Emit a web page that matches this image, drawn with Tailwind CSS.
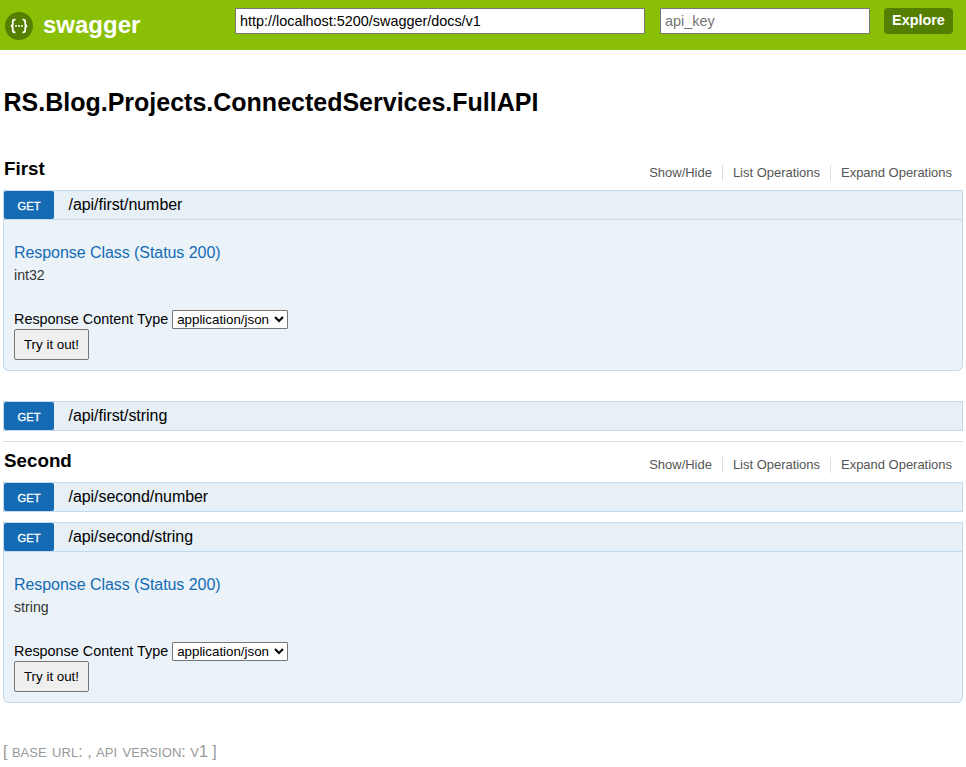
<!DOCTYPE html>
<html lang="en">
<head>
<meta charset="utf-8">
<title>Swagger UI</title>
<script src="https://cdn.jsdelivr.net/npm/@tailwindcss/browser@4"></script>
</head>
<body class="h-[767px] overflow-hidden bg-white font-['Liberation_Sans',Arial,sans-serif] text-black">
<header class="flex h-[50px] items-start bg-[#89bf04] pl-[5px] pr-[13px]">
  <a class="flex items-start pt-[11px] text-white">
    <svg class="h-[30px] w-[30px]" viewBox="0 0 30 30" fill="none">
      <circle cx="14" cy="15" r="14" fill="#547f00"/>
      <path d="M10.5 8.7H9.8Q7.8 8.7 7.8 10.7V13Q7.8 15 5.8 15Q7.8 15 7.8 17V19.3Q7.8 21.3 9.8 21.3H10.5M17.5 8.7H18.2Q20.2 8.7 20.2 10.7V13Q20.2 15 22.2 15Q20.2 15 20.2 17V19.3Q20.2 21.3 18.2 21.3H17.5" stroke="#fff" stroke-width="1.8"/>
      <g fill="#fff"><circle cx="11" cy="15" r="1"/><circle cx="14" cy="15" r="1"/><circle cx="17" cy="15" r="1"/></g>
    </svg>
    <span class="ml-2 text-2xl leading-7 font-bold">swagger</span>
  </a>
  <form class="ml-auto flex pt-2">
    <input class="h-[26px] w-[410px] rounded-[1px] border border-[#767676] bg-white px-1 text-[14.4px]" value="http://localhost:5200/swagger/docs/v1">
    <input class="ml-[15px] h-[26px] w-[210px] rounded-[1px] border border-[#767676] bg-white px-1 text-[14.4px] placeholder:text-[#757575]" placeholder="api_key">
    <button type="button" class="ml-[14px] h-[26px] w-[69px] rounded bg-[#547f00] pb-px text-[14.4px] leading-[25px] font-bold text-white">Explore</button>
  </form>
</header>
<main class="pl-[3px] pr-[3px]">
  <h1 class="mt-[37px] h-[30px] pl-[0.5px] text-[25px] leading-[30px] font-bold">RS.Blog.Projects.ConnectedServices.FullAPI</h1>

  <section class="mt-[33px]">
    <div class="flex h-10 items-start justify-between pt-[7px]">
      <h2 class="pl-px text-[18.8px] leading-6 font-bold">First</h2>
      <div class="mt-[8px] mr-[11px] flex h-4 text-[13px] leading-4 tracking-[-0.02px] text-[#555]">
        <a>Show/Hide</a><a class="ml-[10px] border-l border-[#ddd] pl-[10px]">List Operations</a><a class="ml-[10px] border-l border-[#ddd] pl-[10px]">Expand Operations</a>
      </div>
    </div>
    <div class="flex h-[30px] border border-[#c3d9ec] bg-[#e7eff7]">
      <span class="h-7 w-[50px] rounded-xs bg-[#146bb4] pt-px text-center text-[11.2px] leading-7 text-white [-webkit-text-stroke:0.3px_white]">GET</span>
      <span class="ml-[14.5px] text-base leading-[27px] tracking-[-0.05px]">/api/first/number</span>
    </div>
    <div class="flex h-[151px] flex-col items-start rounded-b-md border border-t-0 border-[#c3d9ec] bg-[#ebf3f9] px-[10px] pt-[23px]">
      <h4 class="h-5 text-base leading-5 tracking-[-0.06px] text-[#146bb4]">Response Class (Status 200)</h4>
      <div class="mt-[3px] h-5 text-[14.2px] leading-[18px] text-[#333]">int32</div>
      <div class="mt-[24px] flex h-[19px] text-[14.4px] leading-[18px]">
        <label>Response Content Type</label>
        <select class="ml-1 h-[19px] w-[116px] rounded-[1px] border border-[#767676] bg-white text-[13.33px] leading-4"><option>application/json</option></select>
      </div>
      <button class="h-[31px] w-[75px] rounded-xs border border-[#767676] bg-[#efefef] text-[13.33px]">Try it out!</button>
    </div>
    <div class="mt-[30px] flex h-[30px] border border-[#c3d9ec] bg-[#e7eff7]">
      <span class="h-7 w-[50px] rounded-xs bg-[#146bb4] pt-px text-center text-[11.2px] leading-7 text-white [-webkit-text-stroke:0.3px_white]">GET</span>
      <span class="ml-[14.5px] text-base leading-[27px] tracking-[-0.05px]">/api/first/string</span>
    </div>
  </section>

  <section class="mt-[10px] border-t border-[#ddd]">
    <div class="flex h-10 items-start justify-between pt-[7px]">
      <h2 class="pl-px text-[18.8px] leading-6 font-bold">Second</h2>
      <div class="mt-[8px] mr-[11px] flex h-4 text-[13px] leading-4 tracking-[-0.02px] text-[#555]">
        <a>Show/Hide</a><a class="ml-[10px] border-l border-[#ddd] pl-[10px]">List Operations</a><a class="ml-[10px] border-l border-[#ddd] pl-[10px]">Expand Operations</a>
      </div>
    </div>
    <div class="flex h-[30px] border border-[#c3d9ec] bg-[#e7eff7]">
      <span class="h-7 w-[50px] rounded-xs bg-[#146bb4] pt-px text-center text-[11.2px] leading-7 text-white [-webkit-text-stroke:0.3px_white]">GET</span>
      <span class="ml-[14.5px] text-base leading-[27px] tracking-[-0.05px]">/api/second/number</span>
    </div>
    <div class="mt-[10px] flex h-[30px] border border-[#c3d9ec] bg-[#e7eff7]">
      <span class="h-7 w-[50px] rounded-xs bg-[#146bb4] pt-px text-center text-[11.2px] leading-7 text-white [-webkit-text-stroke:0.3px_white]">GET</span>
      <span class="ml-[14.5px] text-base leading-[27px] tracking-[-0.05px]">/api/second/string</span>
    </div>
    <div class="flex h-[151px] flex-col items-start rounded-b-md border border-t-0 border-[#c3d9ec] bg-[#ebf3f9] px-[10px] pt-[23px]">
      <h4 class="h-5 text-base leading-5 tracking-[-0.06px] text-[#146bb4]">Response Class (Status 200)</h4>
      <div class="mt-[3px] h-5 text-[14.2px] leading-[18px] text-[#333]">string</div>
      <div class="mt-[24px] flex h-[19px] text-[14.4px] leading-[18px]">
        <label>Response Content Type</label>
        <select class="ml-1 h-[19px] w-[116px] rounded-[1px] border border-[#767676] bg-white text-[13.33px] leading-4"><option>application/json</option></select>
      </div>
      <button class="h-[31px] w-[75px] rounded-xs border border-[#767676] bg-[#efefef] text-[13.33px]">Try it out!</button>
    </div>
  </section>
  <footer class="mt-[38px] text-base leading-5 text-[#999] [font-variant:small-caps]">[ <span class="text-[19px] leading-none tracking-[0.05px]">base url</span>: , <span class="text-[19px] leading-none tracking-[0.05px]">api version</span>: <span class="text-[18.5px] leading-none normal-nums [font-variant:small-caps]">v</span>1 ]</footer>
</main>
</body>
</html>
